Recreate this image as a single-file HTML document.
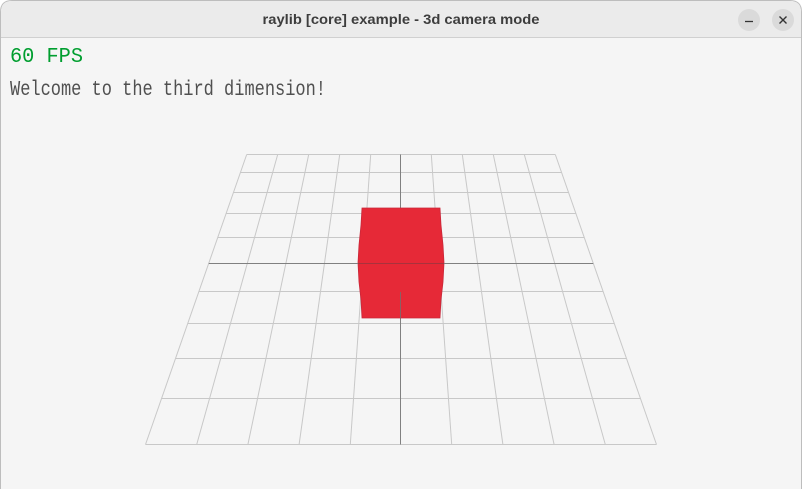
<!DOCTYPE html>
<html><head><style>
html,body{margin:0;padding:0;background:#fff;}
body{width:802px;height:489px;overflow:hidden;}
</style></head><body>
<svg width="802" height="489" viewBox="0 0 802 489" xmlns="http://www.w3.org/2000/svg">
<path d="M0.5,489 V12 Q0.5,0.5 12,0.5 H790 Q801.5,0.5 801.5,12 V489" fill="#f5f5f5" stroke="#bdbdbd"/>
<path d="M1,37 V12 Q1,1 12,1 H790 Q801,1 801,12 V37 Z" fill="#ebebeb"/>
<line x1="1" y1="37.5" x2="801" y2="37.5" stroke="#d0d0d0"/>
<text x="401" y="24" text-anchor="middle" font-family="Liberation Sans, sans-serif" font-weight="bold" font-size="14" fill="#3d3d3d" textLength="277" lengthAdjust="spacingAndGlyphs">raylib [core] example - 3d camera mode</text>
<circle cx="749" cy="20" r="11" fill="#dadada"/>
<line x1="745" y1="21.5" x2="753" y2="21.5" stroke="#333" stroke-width="1.3"/>
<circle cx="783" cy="20" r="11" fill="#dadada"/>
<path d="M779.5,16.5 L786.5,23.5 M786.5,16.5 L779.5,23.5" stroke="#333" stroke-width="1.4"/>

<text x="10" y="62" font-family="Liberation Mono, monospace" font-size="21" fill="#009e2f" textLength="73" lengthAdjust="spacingAndGlyphs">60 FPS</text>
<text x="10" y="95" font-family="Liberation Mono, monospace" font-size="21" fill="#505050" textLength="316" lengthAdjust="spacingAndGlyphs">Welcome to the third dimension!</text>

<g stroke="#c8c8c8" stroke-width="1" fill="none">
<line x1="246.7" y1="154.5" x2="555.3" y2="154.5"/>
<line x1="240.6" y1="172.5" x2="561.4" y2="172.5"/>
<line x1="233.6" y1="192.5" x2="568.4" y2="192.5"/>
<line x1="226.2" y1="213.5" x2="575.8" y2="213.5"/>
<line x1="217.9" y1="237.5" x2="584.1" y2="237.5"/>
<line x1="199.0" y1="291.5" x2="603.0" y2="291.5"/>
<line x1="187.8" y1="323.5" x2="614.2" y2="323.5"/>
<line x1="175.6" y1="358.5" x2="626.4" y2="358.5"/>
<line x1="161.6" y1="398.5" x2="640.4" y2="398.5"/>
<line x1="145.5" y1="444.5" x2="656.5" y2="444.5"/>
<line x1="246.7" y1="154.5" x2="145.5" y2="444.5"/>
<line x1="277.7" y1="154.5" x2="196.7" y2="444.5"/>
<line x1="308.7" y1="154.5" x2="247.9" y2="444.5"/>
<line x1="339.7" y1="154.5" x2="299.1" y2="444.5"/>
<line x1="370.7" y1="154.5" x2="350.3" y2="444.5"/>
<line x1="431.3" y1="154.5" x2="451.7" y2="444.5"/>
<line x1="462.3" y1="154.5" x2="502.9" y2="444.5"/>
<line x1="493.3" y1="154.5" x2="554.1" y2="444.5"/>
<line x1="524.3" y1="154.5" x2="605.3" y2="444.5"/>
<line x1="555.3" y1="154.5" x2="656.5" y2="444.5"/>
</g>
<g stroke="#808080" stroke-width="1">
<line x1="400.5" y1="154.5" x2="400.5" y2="208"/>
<line x1="400.5" y1="292" x2="400.5" y2="444.5"/>
</g>
<polygon points="362,208 440,208 441,225 443,245 444,263 443,282 441,300 440,318 362,318 361,300 359,282 358,263 359,245 361,225" fill="#e62937" stroke="#c9283a" stroke-width="0.8"/>
<line x1="208.8" y1="263.5" x2="593.2" y2="263.5" stroke="#808080" stroke-width="1"/>
<line x1="358" y1="263.5" x2="444" y2="263.5" stroke="#a8323c" stroke-width="1"/>
<line x1="400.5" y1="292" x2="400.5" y2="318" stroke="#8a6064" stroke-width="1"/>
</svg>
</body></html>
